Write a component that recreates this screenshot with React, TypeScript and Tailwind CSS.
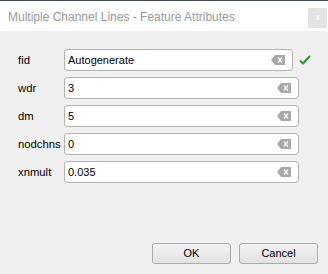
import React from "react";

function ClearIcon() {
  return (
    <svg width="14" height="10" viewBox="0 0 14 10" className="block">
      <path d="M4 0 H14 V10 H4 L0 5 Z" fill="#a9a9a9" />
      <path d="M7 2.5 L11 7.5 M11 2.5 L7 7.5" stroke="#ffffff" strokeWidth="1.3" />
    </svg>
  );
}

function Row({ label, value, check }: { label: string; value: string; check?: boolean }) {
  return (
    <div className="flex items-center h-[22px]">
      <div className="w-[46px] pl-[18px] box-content text-[11.3px] text-[#000]">{label}</div>
      <div className="flex items-center">
        <div
          className={
            "h-[22px] bg-white border border-[#b4b4b4] rounded-[3px] flex items-center pl-[3px] pr-[7px] " +
            (check ? "w-[229px]" : "w-[235px]")
          }
        >
          <span className="flex-1 text-[11px] text-black">{value}</span>
          <ClearIcon />
        </div>
        {check && (
          <svg width="12" height="10" viewBox="0 0 12 10" className="ml-[6px]">
            <path d="M1 5.5 L4 8.5 L11 1" stroke="#2a9a2a" strokeWidth="2" fill="none" />
          </svg>
        )}
      </div>
    </div>
  );
}

export default function App() {
  return (
    <div
      className="w-[328px] h-[274px] bg-[#f0f0f0] flex flex-col overflow-hidden"
      style={{ fontFamily: '"Liberation Sans", Arial, sans-serif' }}
    >
      <div className="h-[1px] bg-[#3d4a52]" />
      <div className="h-[30px] bg-white flex items-center pl-[8px] relative">
        <span className="text-[12px] text-[#999999] mt-[1px]">Multiple Channel Lines - Feature Attributes</span>
        <div className="absolute right-[1px] top-[7px] w-[19px] h-[20px] bg-[#e3e3e3] flex items-center justify-center text-[9px] text-white">
          x
        </div>
      </div>
      <div className="flex flex-col gap-[6px] pt-[18px]">
        <Row label="fid" value="Autogenerate" check />
        <Row label="wdr" value="3" />
        <Row label="dm" value="5" />
        <Row label="nodchns" value="0" />
        <Row label="xnmult" value="0.035" />
      </div>
      <div className="flex-1" />
      <div className="flex justify-end gap-[8px] pr-[10px] pb-[10px]">
        <button className="w-[79px] h-[21px] border border-[#acacac] rounded-[3px] bg-gradient-to-b from-[#f2f2f2] to-[#e2e2e2] text-[11px] text-black">
          OK
        </button>
        <button className="w-[79px] h-[21px] border border-[#acacac] rounded-[3px] bg-gradient-to-b from-[#f2f2f2] to-[#e2e2e2] text-[11px] text-black">
          Cancel
        </button>
      </div>
    </div>
  );
}
